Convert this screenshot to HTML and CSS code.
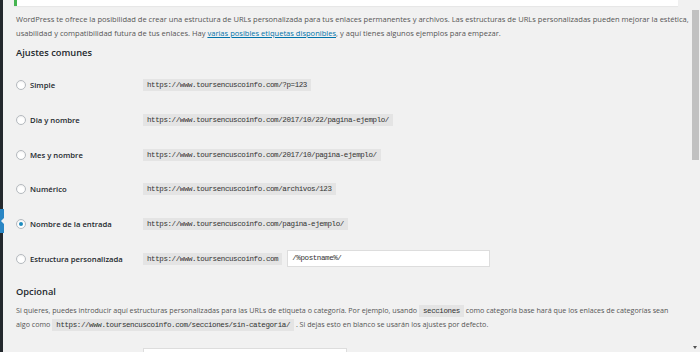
FILE: index.html
```html
<html>
	<head>
		<meta charset="utf-8">
		<link rel="stylesheet" href="styles.css">
	</head>
	<body>
		<div class="menuEdge">
			<div class="currentArrow">
				<svg width="6" height="24" viewBox="0 0 6 24"><rect x="0" y="0" width="4" height="24" fill="#2a86c4"/><path d="M6 7 L1 12 L6 17 Z" fill="#f1f1f1"/></svg>
			</div>
		</div>

		<div class="wrap">
			<div class="notice"></div>

			<p class="intro">WordPress te ofrece la posibilidad de crear una estructura de URLs personalizada para tus enlaces permanentes y archivos. Las estructuras de URLs personalizadas pueden mejorar la estética,<br>usabilidad y compatibilidad futura de tus enlaces. Hay <a href="#">varias posibles etiquetas disponibles</a>, y aquí tienes algunos ejemplos para empezar.</p>

			<h2>Ajustes comunes</h2>

			<div class="options">
				<div class="option">
					<label><span class="radio"></span>Simple</label>
					<div><code>https://www.toursencuscoinfo.com/?p=123</code></div>
				</div>
				<div class="option">
					<label><span class="radio"></span>Dia y nombre</label>
					<div><code>https://www.toursencuscoinfo.com/2017/10/22/pagina-ejemplo/</code></div>
				</div>
				<div class="option">
					<label><span class="radio"></span>Mes y nombre</label>
					<div><code>https://www.toursencuscoinfo.com/2017/10/pagina-ejemplo/</code></div>
				</div>
				<div class="option">
					<label><span class="radio"></span>Numérico</label>
					<div><code>https://www.toursencuscoinfo.com/archivos/123</code></div>
				</div>
				<div class="option">
					<label><span class="radio checked"></span>Nombre de la entrada</label>
					<div><code>https://www.toursencuscoinfo.com/pagina-ejemplo/</code></div>
				</div>
				<div class="option">
					<label><span class="radio"></span>Estructura personalizada</label>
					<div class="custom"><code>https://www.toursencuscoinfo.com</code><div class="textInput">/%postname%/</div></div>
				</div>
			</div>

			<h2 class="optional">Opcional</h2>

			<p class="intro second">Si quieres, puedes introducir aquí estructuras personalizadas para las URLs de etiqueta o categoría. Por ejemplo, usando <code>secciones</code> como categoría base hará que los enlaces de categorías sean<br>algo como <code>https://www.toursencuscoinfo.com/secciones/sin-categoria/</code> . Si dejas esto en blanco se usarán los ajustes por defecto.</p>

			<div class="field">
				<label>Categoría</label>
				<div class="textInput wide"></div>
			</div>
		</div>

		<div class="scrollbar">
			<div class="thumb"></div>
			<div class="spacer"></div>
			<div class="arrowDown"></div>
		</div>
	</body>
</html>
```

FILE: styles.css
```css
html, body {
	margin: 0;
	padding: 0;
	width: 100%;
	height: 100%;
	background: #f1f1f1;
}

body {
	display: flex;
	flex-direction: row;
	overflow: hidden;
	font-family: "Open Sans", "Noto Sans", sans-serif;
	color: #444;
}

.menuEdge {
	width: 3px;
	background: #23282d;
	padding-top: 209px;
	overflow: visible;
}
.currentArrow {
	width: 6px;
	height: 24px;
}
.currentArrow svg {
	display: block;
}

.wrap {
	flex: 1;
	padding: 0 12px 0 11px;
	overflow: hidden;
}

.notice {
	height: 6px;
	background: #fff;
	border-left: 3px solid #46b450;
	box-shadow: 0 1px 1px rgba(0,0,0,0.04);
}

.intro {
	margin: 6px 0 0 2px;
	font-size: 7.55px;
	line-height: 14px;
	white-space: nowrap;
	color: #555;
}
.intro a {
	color: #0073aa;
}
.intro.second {
	margin-top: 4px;
	font-size: 7.15px;
	line-height: 13px;
}

h2 {
	margin: 5px 0 0 2px;
	font-size: 9.3px;
	line-height: 16px;
	font-weight: 600;
	color: #23282d;
}

code {
	font-family: "Liberation Mono", "DejaVu Sans Mono", monospace;
	font-size: 7.5px;
	letter-spacing: -0.4px;
	background: #e4e4e4;
	padding: 2px 4px;
	color: #333;
}

.options {
	margin-top: 7px;
}
.option {
	display: flex;
	flex-direction: row;
	align-items: center;
	height: 34.7px;
}
.option label {
	display: flex;
	align-items: center;
	width: 127px;
	flex: none;
	padding-left: 2px;
	font-size: 7.7px;
	font-weight: 600;
	color: #23282d;
}

.radio {
	width: 8px;
	height: 8px;
	border: 1px solid #b4b9be;
	border-radius: 50%;
	background: #fff;
	margin-right: 4px;
	display: flex;
	align-items: center;
	justify-content: center;
	box-shadow: inset 0 1px 2px rgba(0,0,0,0.07);
}
.radio.checked::after {
	content: "";
	width: 4px;
	height: 4px;
	border-radius: 50%;
	background: #1e8cbe;
}

.custom {
	display: flex;
	align-items: center;
	gap: 5px;
}

.textInput {
	width: 193px;
	height: 15px;
	background: #fff;
	border: 1px solid #ddd;
	padding: 0 4px;
	font-family: "Liberation Mono", "DejaVu Sans Mono", monospace;
	font-size: 7.5px;
	letter-spacing: -0.4px;
	line-height: 15px;
	color: #333;
}

.optional {
	margin-top: 8px;
}

.field {
	display: flex;
	flex-direction: row;
	margin-top: 16px;
}
.field label {
	width: 127px;
	padding-left: 2px;
	padding-top: 3px;
	font-size: 7.7px;
	font-weight: 600;
	color: #23282d;
}
.textInput.wide {
	width: 194px;
	height: 20px;
}

.scrollbar {
	width: 10px;
	display: flex;
	flex-direction: column;
	align-items: center;
	padding: 10px 0 2px 0;
	background: #f1f1f1;
}
.thumb {
	width: 7px;
	height: 150px;
	background: #c1c1c1;
	margin-left: 1px;
}
.spacer {
	flex: 1;
}
.arrowDown {
	width: 0;
	height: 0;
	border-left: 2px solid transparent;
	border-right: 2px solid transparent;
	border-top: 3px solid #505050;
	margin-bottom: 1px;
}
```
